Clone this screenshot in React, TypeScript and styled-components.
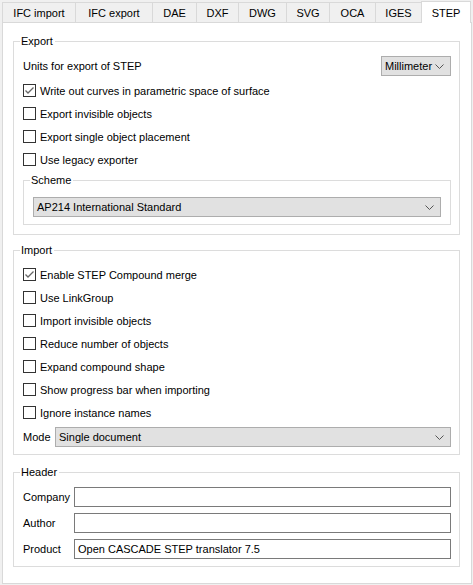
import React from 'react'
import styled, { createGlobalStyle } from 'styled-components'

const GlobalStyle = createGlobalStyle`
  * { box-sizing: border-box; }
  body {
    margin: 0;
    background: #f0f0f0;
    font-family: 'Liberation Sans', Arial, sans-serif;
    font-size: 11px;
    color: #000;
  }
`

const Window = styled.div`
  width: 473px;
  height: 585px;
  padding: 1px 2px 0 2px;
`

const TabBar = styled.div`
  display: flex;
  align-items: flex-end;
  height: 21px;
`

const Tab = styled.div<{ $w: number; $active?: boolean; $last?: boolean }>`
  width: ${(p) => p.$w}px;
  height: ${(p) => (p.$active ? 22 : 20)}px;
  margin-bottom: ${(p) => (p.$active ? -1 : 0)}px;
  position: relative;
  z-index: ${(p) => (p.$active ? 1 : 0)};
  display: flex;
  align-items: center;
  justify-content: center;
  padding-top: ${(p) => (p.$active ? 0 : 1)}px;
  background: ${(p) => (p.$active ? '#fff' : '#f0f0f0')};
  border-top: 1px solid #d9d9d9;
  border-left: 1px solid #d9d9d9;
  border-right: ${(p) => (p.$last ? '1px solid #d9d9d9' : 'none')};
`

const Panel = styled.div`
  width: 470px;
  height: 562px;
  background: #fff;
  border: 1px solid #d9d9d9;
  padding: 11px 11px 0 10px;
  display: flex;
  flex-direction: column;
  gap: 8px;
`

const Group = styled.fieldset<{ $pt?: number; $pb?: number; $mt?: number }>`
  margin: ${(p) => p.$mt ?? 0}px 0 0 0;
  flex-shrink: 0;
  border: 1px solid #dcdcdc;
  padding: ${(p) => p.$pt ?? 8}px 8px ${(p) => p.$pb ?? 10}px 9px;
  display: flex;
  flex-direction: column;
`

const Legend = styled.legend`
  padding: 0 2px 0 1px;
  margin-left: -3px;
  line-height: 14px;
`

const Row = styled.div`
  display: flex;
  align-items: center;
  justify-content: space-between;
  height: 20px;
  flex-shrink: 0;
  margin-bottom: 3px;
`

const CheckRow = styled.label`
  display: flex;
  align-items: center;
  height: 23px;
  flex-shrink: 0;
  gap: 4px;
`

const Box = styled.span`
  width: 13px;
  height: 13px;
  border: 1px solid #333;
  background: #fff;
  display: flex;
  align-items: center;
  justify-content: center;
`

const Combo = styled.div<{ $w?: number; $grow?: boolean }>`
  height: 20px;
  flex: ${(p) => (p.$grow ? '1 1 auto' : '0 0 auto')};
  width: ${(p) => (p.$w ? `${p.$w}px` : 'auto')};
  background: #e1e1e1;
  border: 1px solid #adadad;
  display: flex;
  align-items: center;
  justify-content: space-between;
  padding: 0 6px 0 3px;
`

const SubGroup = styled(Group)`
  margin-top: 2px;
  padding: 10px 9px 7px 9px;
`

const FieldRow = styled.div<{ $mt?: number }>`
  display: flex;
  align-items: center;
  gap: 6px;
  height: 20px;
  flex-shrink: 0;
  margin-top: ${(p) => p.$mt ?? 0}px;
`

const FieldLabel = styled.span<{ $w: number }>`
  width: ${(p) => p.$w}px;
  flex: 0 0 auto;
`

const Input = styled.div`
  flex: 1;
  height: 20px;
  border: 1px solid #7a7a7a;
  background: #fff;
  display: flex;
  align-items: center;
  padding: 0 3px;
`

const Fields = styled.div`
  display: flex;
  flex-direction: column;
  gap: 6px;
`

const Chevron = () => (
  <svg width="9" height="5" viewBox="0 0 9 5">
    <path d="M0.5 0.5 L4.5 4.5 L8.5 0.5" fill="none" stroke="#555" strokeWidth="1" />
  </svg>
)

const Check: React.FC<{ checked?: boolean; label: string }> = ({ checked, label }) => (
  <CheckRow>
    <Box>
      {checked && (
        <svg width="11" height="11" viewBox="0 0 11 11">
          <path d="M1.5 5.5 L4 8 L9.5 2.5" fill="none" stroke="#666" strokeWidth="1.3" />
        </svg>
      )}
    </Box>
    <span>{label}</span>
  </CheckRow>
)

const tabs = [
  { name: 'IFC import', w: 73 },
  { name: 'IFC export', w: 77 },
  { name: 'DAE', w: 44 },
  { name: 'DXF', w: 42 },
  { name: 'DWG', w: 48 },
  { name: 'SVG', w: 43 },
  { name: 'OCA', w: 46 },
  { name: 'IGES', w: 46 },
  { name: 'STEP', w: 50 },
]

const App: React.FC = () => {
  return (
    <Window>
      <GlobalStyle />
      <TabBar>
        {tabs.map((t, i) => (
          <Tab key={t.name} $w={t.w} $active={t.name === 'STEP'} $last={i === tabs.length - 1}>
            {t.name}
          </Tab>
        ))}
      </TabBar>
      <Panel>
        <Group $pb={9}>
          <Legend>Export</Legend>
          <Row>
            <span>Units for export of STEP</span>
            <Combo $w={70}>
              <span>Millimeter</span>
              <Chevron />
            </Combo>
          </Row>
          <Check checked label="Write out curves in parametric space of surface" />
          <Check label="Export invisible objects" />
          <Check label="Export single object placement" />
          <Check label="Use legacy exporter" />
          <SubGroup>
            <Legend>Scheme</Legend>
            <Combo>
              <span>AP214 International Standard</span>
              <Chevron />
            </Combo>
          </SubGroup>
        </Group>
        <Group $pt={6} $pb={7}>
          <Legend>Import</Legend>
          <Check checked label="Enable STEP Compound merge" />
          <Check label="Use LinkGroup" />
          <Check label="Import invisible objects" />
          <Check label="Reduce number of objects" />
          <Check label="Expand compound shape" />
          <Check label="Show progress bar when importing" />
          <Check label="Ignore instance names" />
          <FieldRow $mt={3}>
            <FieldLabel $w={26}>Mode</FieldLabel>
            <Combo $grow>
              <span>Single document</span>
              <Chevron />
            </Combo>
          </FieldRow>
        </Group>
        <Group $mt={2} $pb={7}>
          <Legend>Header</Legend>
          <Fields>
            <FieldRow>
              <FieldLabel $w={45}>Company</FieldLabel>
              <Input />
            </FieldRow>
            <FieldRow>
              <FieldLabel $w={45}>Author</FieldLabel>
              <Input />
            </FieldRow>
            <FieldRow>
              <FieldLabel $w={45}>Product</FieldLabel>
              <Input>Open CASCADE STEP translator 7.5</Input>
            </FieldRow>
          </Fields>
        </Group>
      </Panel>
    </Window>
  )
}

export default App
